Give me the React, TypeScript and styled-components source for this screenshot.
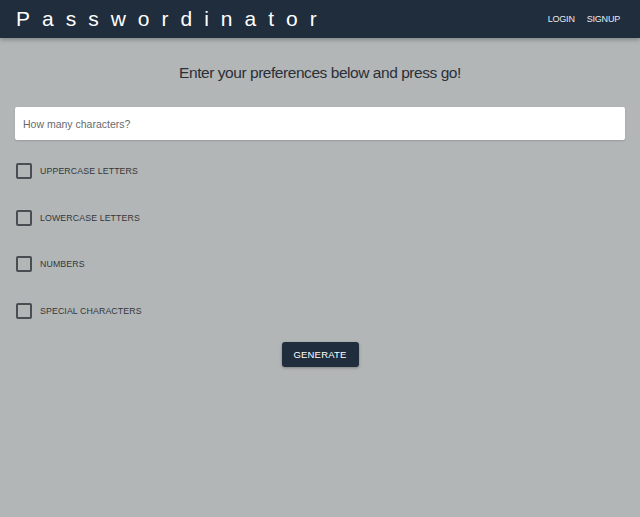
import { createGlobalStyle, styled } from "styled-components";

const GlobalStyle = createGlobalStyle`
  html, body {
    margin: 0;
    padding: 0;
    background: #b3b6b7;
  }
  body {
    font-family: "Liberation Sans", Arial, sans-serif;
  }
`;

const options = [
  "Uppercase letters",
  "Lowercase letters",
  "Numbers",
  "Special characters",
];

function App() {
  return (
    <>
      <GlobalStyle />
      <Page>
        <NavBar>
          <Brand>Passwordinator</Brand>
          <NavLinks>
            <NavLink>Login</NavLink>
            <NavLink>Signup</NavLink>
          </NavLinks>
        </NavBar>
        <Main>
          <Heading>Enter your preferences below and press go!</Heading>
          <LengthInput placeholder="How many characters?" />
          <OptionList>
            {options.map((label) => (
              <OptionRow key={label}>
                <Box type="checkbox" />
                <OptionLabel>{label}</OptionLabel>
              </OptionRow>
            ))}
          </OptionList>
          <ButtonRow>
            <GenerateButton>Generate</GenerateButton>
          </ButtonRow>
        </Main>
      </Page>
    </>
  );
}

export default App;

const Page = styled.div`
  min-height: 517px;
  background: #b3b6b7;
  border-radius: 0 0 6px 6px;
  overflow: hidden;
`;

const NavBar = styled.header`
  height: 38px;
  background: #1f2d3d;
  display: flex;
  align-items: center;
  justify-content: space-between;
  padding: 0 20px 0 16px;
  box-shadow: 0 2px 4px rgba(0, 0, 0, 0.25);
`;

const Brand = styled.div`
  color: #ffffff;
  font-size: 21px;
  letter-spacing: 12px;
  line-height: 1;
  margin-top: -1px;
`;

const NavLinks = styled.nav`
  display: flex;
  gap: 12px;
`;

const NavLink = styled.span`
  color: #e8ebee;
  font-size: 9px;
  letter-spacing: -0.2px;
  text-transform: uppercase;
`;

const Main = styled.main`
  padding: 25px 15px 0;
`;

const Heading = styled.h1`
  margin: 0;
  text-align: center;
  font-weight: normal;
  font-size: 15.5px;
  letter-spacing: -0.45px;
  color: #2a2f38;
  line-height: 20px;
`;

const LengthInput = styled.input`
  display: block;
  box-sizing: border-box;
  width: 100%;
  height: 33px;
  margin-top: 24px;
  border: none;
  border-radius: 2px;
  padding: 0 8px;
  background: #ffffff;
  font-family: "Liberation Sans", Arial, sans-serif;
  font-size: 10.5px;
  color: #333;
  box-shadow: 0 1px 2px rgba(0, 0, 0, 0.15);
  &::placeholder {
    color: #666a70;
  }
`;

const OptionList = styled.div`
  display: flex;
  flex-direction: column;
  gap: 30.5px;
  margin-top: 23px;
`;

const OptionRow = styled.label`
  display: flex;
  align-items: center;
  gap: 8px;
  height: 16px;
`;

const Box = styled.input`
  appearance: none;
  margin: 0 0 0 1px;
  width: 16px;
  height: 16px;
  box-sizing: border-box;
  border: 2px solid #4a4d52;
  border-radius: 2px;
  background: transparent;
`;

const OptionLabel = styled.span`
  font-size: 8.8px;
  letter-spacing: 0.1px;
  text-transform: uppercase;
  color: #33363c;
`;

const ButtonRow = styled.div`
  display: flex;
  justify-content: center;
  margin-top: 23px;
`;

const GenerateButton = styled.button`
  width: 77px;
  height: 25px;
  border: none;
  border-radius: 3px;
  background: #1f2d3d;
  color: #ffffff;
  font-family: "Liberation Sans", Arial, sans-serif;
  font-size: 9.5px;
  text-transform: uppercase;
  letter-spacing: 0.2px;
  box-shadow: 0 1px 3px rgba(0, 0, 0, 0.3);
`;
